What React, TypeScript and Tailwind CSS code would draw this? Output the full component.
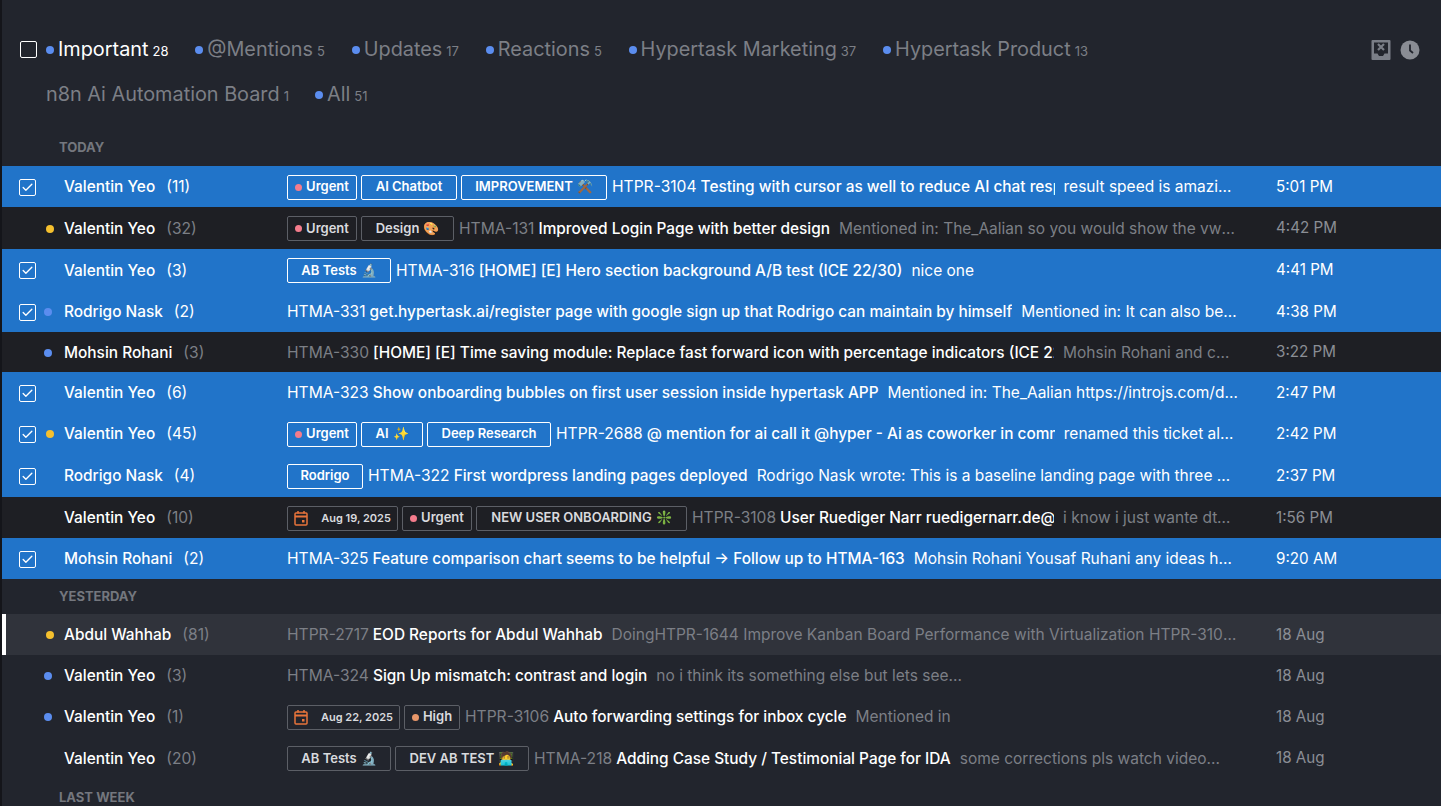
import { Check } from 'lucide-react';

type Tag = { label: string; dot?: string; emoji?: string; date?: boolean; w: number };
type Row = {
  name: string;
  count: number;
  dot?: string;
  selected?: boolean;
  hover?: boolean;
  tags?: Tag[];
  id: string;
  title: string;
  titleW?: number;
  snippet: string;
  time: string;
  h: string;
};

const BLUE = '#5b8def';
const YELLOW = '#f5c02e';

const tabs1 = [
  { label: 'Important', n: 28, active: true, dot: true },
  { label: '@Mentions', n: 5, dot: true },
  { label: 'Updates', n: 17, dot: true },
  { label: 'Reactions', n: 5, dot: true },
  { label: 'Hypertask Marketing', n: 37, dot: true },
  { label: 'Hypertask Product', n: 13, dot: true },
];

const urgent = (w: number): Tag => ({ label: 'Urgent', dot: '#f47c8c', w });

const today: Row[] = [
  { name: 'Valentin Yeo', count: 11, selected: true, h: 'h-[41px]', tags: [urgent(70), { label: 'AI Chatbot', w: 96 }, { label: 'IMPROVEMENT', emoji: '⚒️', w: 146 }], id: 'HTPR-3104', title: 'Testing with cursor as well to reduce AI chat response', titleW: 354, snippet: 'result speed is amazing and works well for every case', time: '5:01 PM' },
  { name: 'Valentin Yeo', count: 32, dot: YELLOW, h: 'h-[42px]', tags: [urgent(70), { label: 'Design', emoji: '🎨', w: 93 }], id: 'HTMA-131', title: 'Improved Login Page with better design', snippet: 'Mentioned in: The_Aalian so you would show the vw and more', time: '4:42 PM' },
  { name: 'Valentin Yeo', count: 3, selected: true, h: 'h-[42px]', tags: [{ label: 'AB Tests', emoji: '🔬', w: 104 }], id: 'HTMA-316', title: '[HOME] [E] Hero section background A/B test (ICE 22/30)', snippet: 'nice one', time: '4:41 PM' },
  { name: 'Rodrigo Nask', count: 2, dot: BLUE, selected: true, h: 'h-[41px]', id: 'HTMA-331', title: 'get.hypertask.ai/register page with google sign up that Rodrigo can maintain by himself', snippet: 'Mentioned in: It can also be done through the form', time: '4:38 PM' },
  { name: 'Mohsin Rohani', count: 3, dot: BLUE, h: 'h-[40px]', id: 'HTMA-330', title: '[HOME] [E] Time saving module: Replace fast forward icon with percentage indicators (ICE 22/30)', titleW: 681, snippet: 'Mohsin Rohani and can be seen in the next version', time: '3:22 PM' },
  { name: 'Valentin Yeo', count: 6, selected: true, h: 'h-[41px]', id: 'HTMA-323', title: 'Show onboarding bubbles on first user session inside hypertask APP', snippet: 'Mentioned in: The_Aalian https://introjs.com/docs/intro', time: '2:47 PM' },
  { name: 'Valentin Yeo', count: 45, dot: YELLOW, selected: true, h: 'h-[41px]', tags: [urgent(70), { label: 'AI', emoji: '✨', w: 62 }, { label: 'Deep Research', w: 124 }], id: 'HTPR-2688', title: '@ mention for ai call it @hyper - Ai as coworker in comments', titleW: 408, snippet: 'renamed this ticket already for this one', time: '2:42 PM' },
  { name: 'Rodrigo Nask', count: 4, selected: true, h: 'h-[43px]', tags: [{ label: 'Rodrigo', w: 76 }], id: 'HTMA-322', title: 'First wordpress landing pages deployed', snippet: 'Rodrigo Nask wrote: This is a baseline landing page with three sections', time: '2:37 PM' },
  { name: 'Valentin Yeo', count: 10, h: 'h-[41px]', tags: [{ label: 'Aug 19, 2025', date: true, w: 111 }, urgent(70), { label: 'NEW USER ONBOARDING', emoji: '❇️', w: 211 }], id: 'HTPR-3108', title: 'User Ruediger Narr ruedigernarr.de@gmail.com signed up', titleW: 274, snippet: 'i know i just wante dto say this is wrong here', time: '1:56 PM' },
  { name: 'Mohsin Rohani', count: 2, selected: true, h: 'h-[41px]', id: 'HTMA-325', title: 'Feature comparison chart seems to be helpful → Follow up to HTMA-163', snippet: 'Mohsin Rohani Yousaf Ruhani any ideas how to do this', time: '9:20 AM' },
];

const yesterday: Row[] = [
  { name: 'Abdul Wahhab', count: 81, dot: YELLOW, hover: true, h: 'h-[41px]', id: 'HTPR-2717', title: 'EOD Reports for Abdul Wahhab', snippet: 'DoingHTPR-1644 Improve Kanban Board Performance with Virtualization HTPR-3101 and more', time: '18 Aug' },
  { name: 'Valentin Yeo', count: 3, dot: BLUE, h: 'h-[41px]', id: 'HTMA-324', title: 'Sign Up mismatch: contrast and login', snippet: 'no i think its something else but lets see...', time: '18 Aug' },
  { name: 'Valentin Yeo', count: 1, dot: BLUE, h: 'h-[41px]', tags: [{ label: 'Aug 22, 2025', date: true, w: 113 }, { label: 'High', dot: '#e8976a', w: 56 }], id: 'HTPR-3106', title: 'Auto forwarding settings for inbox cycle', snippet: 'Mentioned in', time: '18 Aug' },
  { name: 'Valentin Yeo', count: 20, h: 'h-[42px]', tags: [{ label: 'AB Tests', emoji: '🔬', w: 104 }, { label: 'DEV AB TEST', emoji: '🧑‍💻', w: 134 }], id: 'HTMA-218', title: 'Adding Case Study / Testimonial Page for IDA', snippet: 'some corrections pls watch video...', time: '18 Aug' },
];

function CalendarIcon() {
  return (
    <svg width="14" height="16" viewBox="0 0 14 16" fill="none" className="mr-[9px] shrink-0 text-[#e8743b]">
      <rect x="1" y="3" width="12" height="12" rx="1" stroke="currentColor" strokeWidth="1.5" />
      <path d="M1 6.5h12" stroke="currentColor" strokeWidth="2" />
      <path d="M4 1v2.5M10 1v2.5" stroke="currentColor" strokeWidth="1.5" />
      <rect x="8" y="10" width="2.5" height="2.5" fill="currentColor" />
    </svg>
  );
}

function InboxCloseIcon() {
  return (
    <svg width="20" height="20" viewBox="0 0 20 20">
      <rect width="19" height="20" x="0.5" fill="#7a7e87" rx="1" />
      <path d="M3 2.5h14v11h-3.5l-1.5 2.5H8l-1.5-2.5H3z" fill="#22252d" />
      <path d="M7 4l6 6M13 4l-6 6" stroke="#7a7e87" strokeWidth="2.2" />
    </svg>
  );
}

function ClockIcon() {
  return (
    <svg width="20" height="20" viewBox="0 0 20 20" fill="none">
      <circle cx="10" cy="10" r="9.5" fill="#8a8d94" />
      <path d="M10 4.5v6l3 2.5" stroke="#22252d" strokeWidth="1.8" />
    </svg>
  );
}

function RowTag({ tag, selected }: { tag: Tag; selected?: boolean }) {
  return (
    <span
      style={{ width: tag.w }}
      className={`flex h-[25px] shrink-0 items-center justify-center gap-1 rounded-[2px] border font-semibold ${
        tag.date ? 'text-[11px]' : 'text-[13px]'
      } ${selected ? 'border-white text-white' : 'border-[#5c5f66] text-[#d9dade]'}`}
    >
      {tag.date && <CalendarIcon />}
      {tag.dot && <span className="h-[7px] w-[7px] rounded-full" style={{ background: tag.dot }} />}
      <span>{tag.label}</span>
      {tag.emoji && <span className="text-[13px]">{tag.emoji}</span>}
    </span>
  );
}

function MailRow({ row, band }: { row: Row; band?: boolean }) {
  const muted = row.selected ? 'text-white' : 'text-[#7c7f86]';
  const bg = row.selected ? 'bg-[#2174c9]' : row.hover ? 'bg-[#30333b]' : band ? 'bg-[#1e1f24]' : '';
  return (
    <div className={`relative flex items-center pt-px text-[15.4px] font-medium ${row.h} ${bg}`}>
      {row.hover && <div className="absolute inset-y-0 left-0 w-[4px] bg-white" />}
      <div className="flex w-[62px] shrink-0 items-center">
        <div className="flex w-[34px] justify-end">
          {row.selected && (
            <span className="flex h-[17px] w-[17px] items-center justify-center rounded-[2px] border border-white">
              <Check size={13} strokeWidth={2.5} className="text-white" />
            </span>
          )}
        </div>
        {row.dot && (
          <span
            className={`h-2 w-2 rounded-full ${row.dot === BLUE ? 'ml-2' : 'ml-[10px]'}`}
            style={{ background: row.dot }}
          />
        )}
      </div>
      <div className="w-[223px] shrink-0 text-white">
        {row.name}
        <span className={`ml-[11px] text-[15.6px] font-normal ${muted}`}>({row.count})</span>
      </div>
      <div className="flex w-[951px] shrink-0 items-center overflow-hidden whitespace-nowrap">
        {row.tags && (
          <div className="mr-[5px] flex shrink-0 gap-1">
            {row.tags.map((t) => (
              <RowTag key={t.label} tag={t} selected={row.selected} />
            ))}
          </div>
        )}
        <span className={`mr-1 shrink-0 text-[15.6px] font-normal ${muted}`}>{row.id}</span>
        <span className="shrink-0 overflow-hidden text-white" style={row.titleW ? { maxWidth: row.titleW } : undefined}>
          {row.title}
        </span>
        <span className={`ml-[9px] min-w-0 truncate text-[15.5px] font-normal ${muted}`}>{row.snippet}</span>
      </div>
      <div className={`ml-[38px] text-[15.2px] font-normal ${row.selected ? 'text-white' : 'text-[#8b8e95]'}`}>{row.time}</div>
    </div>
  );
}

function SectionLabel({ children, cls }: { children: string; cls: string }) {
  return <div className={`flex items-center pl-[57px] text-[13px] font-bold text-[#74777e] ${cls}`}>{children}</div>;
}

function Tab({ label, n, active, dot }: { label: string; n: number; active?: boolean; dot?: boolean }) {
  const color = active ? 'text-white' : 'text-[#7c7f86]';
  return (
    <div className="flex items-center">
      {dot && <span className="mr-1 h-2 w-2 rounded-full bg-[#5b8def]" />}
      <span className={`text-[19.85px] ${color}`}>{label}</span>
      <span className={`ml-[4px] mt-1 text-[13px] ${color}`}>{n}</span>
    </div>
  );
}

export default function App() {
  return (
    <div className="h-[806px] w-[1441px] overflow-hidden border-l-2 border-[#14151a] bg-[#22252d] font-['Inter',sans-serif]">
      <div className="relative flex h-[72px] items-center pl-[18px] pt-[26px]">
        <span className="mr-[9px] h-[17px] w-[17px] rounded-[2px] border border-white" />
        <div className="mt-[2px] flex gap-[26.8px]">
          {tabs1.map((t) => (
            <Tab key={t.label} {...t} />
          ))}
        </div>
        <div className="absolute right-[21px] top-[40px] flex items-center gap-[9px]">
          <InboxCloseIcon />
          <ClockIcon />
        </div>
      </div>
      <div className="flex h-[46px] items-center gap-[26px] pl-[44px]">
        <Tab label="n8n Ai Automation Board" n={1} />
        <Tab label="All" n={51} dot />
      </div>
      <SectionLabel cls="h-[48px] pt-[12px]">TODAY</SectionLabel>
      {today.map((r, i) => (
        <MailRow key={i} row={r} band />
      ))}
      <SectionLabel cls="h-[35px]">YESTERDAY</SectionLabel>
      {yesterday.map((r, i) => (
        <MailRow key={i} row={r} />
      ))}
      <SectionLabel cls="h-[34px] pt-[4px]">LAST WEEK</SectionLabel>
    </div>
  );
}
